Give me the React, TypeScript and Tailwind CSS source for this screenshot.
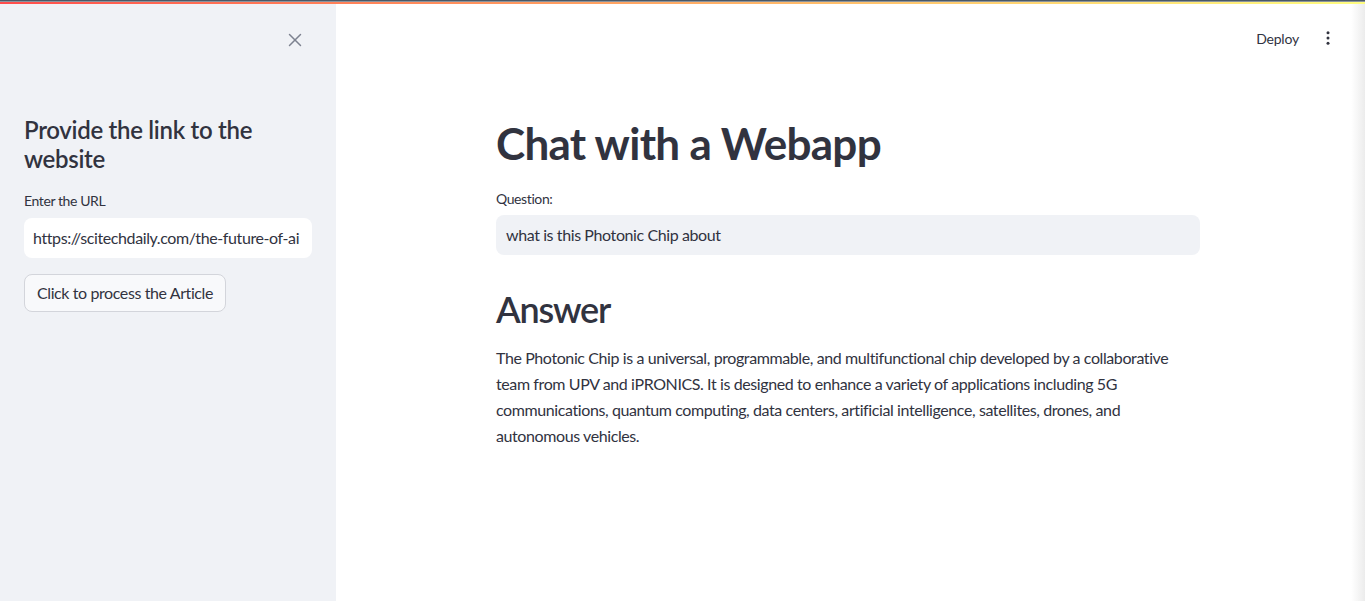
import { X } from "lucide-react";

export default function App() {
  return (
    <div className="relative flex h-[601px] w-[1365px] overflow-hidden bg-white font-[Lato,sans-serif] tracking-[-0.4px] text-[#31333f]">
      <div className="absolute left-0 right-0 top-0 z-10 flex flex-col">
        <div className="h-px bg-[#4a5866]" />
        <div className="h-px bg-[#8a949e]" />
        <div className="h-[2px] bg-gradient-to-r from-[#ff4b4b] to-[#fffd80]" />
      </div>

      <aside className="flex h-full w-[336px] shrink-0 flex-col bg-[#f0f2f6] px-6">
        <div className="flex h-[80px] items-center justify-end pr-[6px]">
          <X size={22} strokeWidth={1.6} className="text-[#7d8290]" />
        </div>
        <h2 className="mt-[35px] text-[24px] font-semibold leading-[29px] tracking-[-0.3px]">
          Provide the link to the website
        </h2>
        <label className="mt-[18px] text-[14px] leading-[20px]">Enter the URL</label>
        <div className="mt-[7px] flex h-[40px] items-center overflow-hidden rounded-lg bg-white pl-[9px] text-[16px]">
          <span className="whitespace-nowrap">https://scitechdaily.com/the-future-of-ai</span>
        </div>
        <div className="mt-[16px]">
          <button className="h-[38px] rounded-lg border border-[#d3d5db] bg-[#f8f9fb] px-3 text-[16px] text-[#31333f]">
            Click to process the Article
          </button>
        </div>
      </aside>

      <main className="relative flex h-full flex-1 flex-col">
        <div className="flex h-[76px] items-center justify-end gap-[20px] pr-[28px]">
          <span className="text-[14px] tracking-[-0.2px]">Deploy</span>
          <svg width="18" height="18" viewBox="0 0 24 24" className="text-[#31333f]">
            <circle cx="12" cy="5" r="2" fill="currentColor" />
            <circle cx="12" cy="12" r="2" fill="currentColor" />
            <circle cx="12" cy="19" r="2" fill="currentColor" />
          </svg>
        </div>
        <div className="flex justify-center pr-[5px]">
          <div className="w-[704px]">
            <h1 className="mt-[41px] text-[44px] font-bold leading-[53px] tracking-[-0.7px]">Chat with a Webapp</h1>
            <label className="mt-[19px] block text-[14px] leading-[20px]">Question:</label>
            <div className="mt-[6px] flex h-[40px] items-center rounded-lg bg-[#f0f2f6] pl-[10px] text-[16px]">
              what is this Photonic Chip about
            </div>
            <h2 className="mt-[33px] text-[36px] font-semibold leading-[43px] tracking-[-1.2px]">Answer</h2>
            <p className="mt-[14px] text-[16px] leading-[26px]">
              The Photonic Chip is a universal, programmable, and multifunctional chip developed by a collaborative
              team from UPV and iPRONICS. It is designed to enhance a variety of applications including 5G
              communications, quantum computing, data centers, artificial intelligence, satellites, drones, and
              autonomous vehicles.
            </p>
          </div>
        </div>
        <div className="absolute bottom-0 right-0 top-[4px] w-[14px] bg-gradient-to-r from-transparent to-[#ececec]" />
      </main>
    </div>
  );
}
